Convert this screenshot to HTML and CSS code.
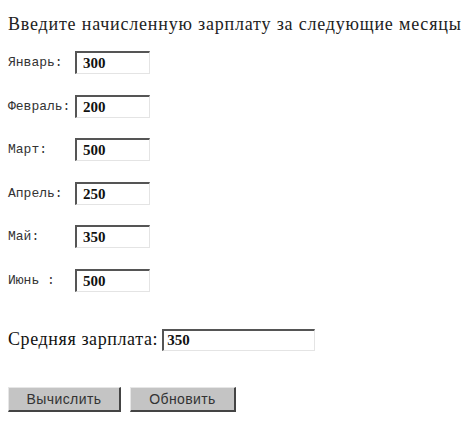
FILE: index.html
```html
<!DOCTYPE html>
<html lang="ru">
<head>
<meta charset="utf-8">
<link rel="stylesheet" href="styles.css">
</head>
<body>
<div class="page">
  <p class="title">Введите начисленную зарплату за следующие месяцы</p>
  <div class="months">
    <label class="month-label">Январь:</label><input class="field" type="text" value="300">
    <label class="month-label">Февраль:</label><input class="field" type="text" value="200">
    <label class="month-label">Март:</label><input class="field" type="text" value="500">
    <label class="month-label">Апрель:</label><input class="field" type="text" value="250">
    <label class="month-label">Май:</label><input class="field" type="text" value="350">
    <label class="month-label">Июнь :</label><input class="field" type="text" value="500">
  </div>
  <div class="avg-row">
    <span class="avg-label">Средняя зарплата:</span><input class="field field-wide" type="text" value="350">
  </div>
  <div class="buttons">
    <button class="btn btn-calc" type="button">Вычислить</button>
    <button class="btn btn-reset" type="button">Обновить</button>
  </div>
</div>
</body>
</html>
```

FILE: styles.css
```css
html, body {
  margin: 0;
  padding: 0;
  background: #ffffff;
}
body {
  padding: 8px;
  font-family: "Liberation Serif", "Times New Roman", serif;
  color: #1a1a1a;
}
.page {
  display: flex;
  flex-direction: column;
}
.title {
  margin: 5px 0 0 0;
  font-size: 18px;
  letter-spacing: 0.8px;
  line-height: 22px;
  color: #222;
}
.months {
  margin-top: 16px;
  display: grid;
  grid-template-columns: 67px 75px;
  grid-auto-rows: 23px;
  row-gap: 20.6px;
  align-items: center;
}
.month-label {
  font-family: "Liberation Mono", "Courier New", monospace;
  font-size: 13px;
  color: #333;
}
.field {
  box-sizing: border-box;
  width: 75px;
  height: 23px;
  margin: 0;
  padding: 1px 0 0 6px;
  background: #fff;
  border-style: solid;
  border-width: 2px 1px 1px 2px;
  border-color: #555 #e4e4e4 #e4e4e4 #555;
  font-family: "Liberation Serif", "Times New Roman", serif;
  font-weight: bold;
  font-size: 15px;
  color: #111;
  outline: none;
}
.avg-row {
  margin-top: 37px;
  display: flex;
  align-items: center;
  gap: 4px;
}
.avg-label {
  font-size: 18px;
  letter-spacing: 0.6px;
  color: #111;
}
.field-wide {
  width: 153px;
  height: 22px;
  padding-left: 3px;
}
.buttons {
  margin-top: 36px;
  display: flex;
  gap: 9px;
}
.btn {
  box-sizing: border-box;
  height: 25px;
  margin: 0;
  padding: 0;
  background: #c4c4c4;
  border-style: solid;
  border-width: 1px 2px 2px 1px;
  border-color: #e6e6e6 #444 #444 #e6e6e6;
  font-family: "Liberation Sans", Arial, sans-serif;
  font-size: 14px;
  letter-spacing: 0.4px;
  color: #333;
}
.btn-calc { width: 113px; }
.btn-reset { width: 106px; }
```
